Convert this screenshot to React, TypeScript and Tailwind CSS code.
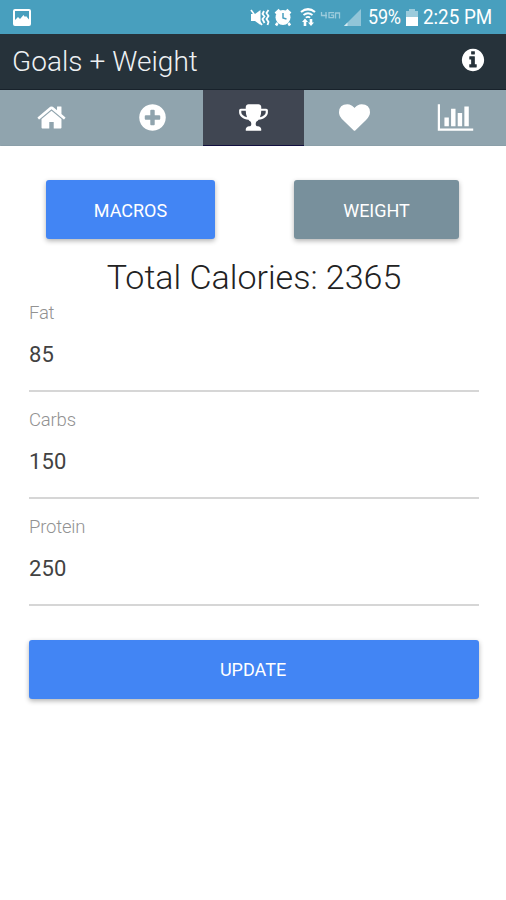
import { useState, type ReactNode } from "react";

const circle =
  "q0 209-103 385.5t-279.5 279.5-385.5 103-385.5-103-279.5-279.5-103-385.5 103-385.5 279.5-279.5 385.5-103 385.5 103 279.5 279.5 103 385.5z";

const icons = {
  home: "M1472 992v480q0 26-19 45t-45 19h-384v-384h-256v384h-384q-26 0-45-19t-19-45v-480q0-1 .5-3t.5-3l575-474 575 474q1 2 1 6zm223-69l-62 74q-8 9-21 11h-3q-13 0-21-7l-692-577-692 577q-12 8-24 7-13-2-21-11l-62-74q-8-10-7-23.5t11-21.5l719-599q32-26 76-26t76 26l244 204v-195q0-14 9-23t23-9h192q14 0 23 9t9 23v408l219 182q10 8 11 21.5t-7 23.5z",
  add:
    "M1344 960v-128q0-26-19-45t-45-19h-256v-256q0-26-19-45t-45-19h-128q-26 0-45 19t-19 45v256h-256q-26 0-45 19t-19 45v128q0 26 19 45t45 19h256v256q0 26 19 45t45 19h128q26 0 45-19t19-45v-256h256q26 0 45-19t19-45zm320-64" +
    circle,
  goals:
    "M522 883q-74-162-74-371h-256v96q0 78 94.500 162t235.500 113zm1078-275v-96h-256q0 209-74 371 141-29 235.500-113t94.500-162zm128-128v128q0 71-41.500 143t-112 130-173 97.500-215.500 44.500q-42 54-95 95-38 34-52.500 72.500t-14.500 89.500q0 54 30.500 91t97.500 37q75 0 133.500 45.500t58.500 114.500v64q0 14-9 23t-23 9h-832q-14 0-23-9t-9-23v-64q0-69 58.500-114.500t133.500-45.500q67 0 97.500-37t30.500-91q0-51-14.500-89.500t-52.500-72.500q-53-41-95-95-113-5-215.500-44.500t-173-97.500-112-130-41.500-143v-128q0-40 28-68t68-28h288v-96q0-66 47-113t113-47h576q66 0 113 47t47 113v96h288q40 0 68 28t28 68z",
  heart:
    "M896 1664q-26 0-44-18l-624-602q-10-8-27.500-26t-55.500-65.500-68-97.500-53.500-121-23.500-138q0-220 127-344t351-124q62 0 126.500 21.500t120 58 95.500 68.500 76 68q36-36 76-68t95.500-68.500 120-58 126.500-21.500q224 0 351 124t127 344q0 221-229 450l-623 600q-18 18-44 18z",
  chart:
    "M512 896v512h-256v-512h256zm384-512v1024h-256v-1024h256zm1024 1152v128h-2048v-1536h128v1408h1920zm-640-896v768h-256v-768h256zm384-384v1152h-256v-1152h256z",
  info:
    "M1152 1376v-160q0-14-9-23t-23-9h-96v-512q0-14-9-23t-23-9h-320q-14 0-23 9t-9 23v160q0 14 9 23t23 9h96v320h-96q-14 0-23 9t-9 23v160q0 14 9 23t23 9h448q14 0 23-9t9-23zm-128-896v-160q0-14-9-23t-23-9h-192q-14 0-23 9t-9 23v160q0 14 9 23t23 9h192q14 0 23-9t9-23zm640 416" +
    circle,
};

type IconName = keyof typeof icons;

function Icon({ name, className }: { name: IconName; className: string }) {
  return (
    <svg
      viewBox="0 0 1792 1792"
      fill="currentColor"
      overflow="visible"
      className={className}
    >
      <path d={icons[name]} />
    </svg>
  );
}

function StatusBar() {
  return (
    <div className="flex h-[34px] items-center bg-[#489fbe] pr-[14px] pl-[13px] text-white">
      <svg viewBox="0 0 18 17" className="h-[17px] w-[18px]">
        <path
          fill="currentColor"
          fillRule="evenodd"
          d="M2 0h14a2 2 0 0 1 2 2v13a2 2 0 0 1-2 2H2a2 2 0 0 1-2-2V2a2 2 0 0 1 2-2zm0 2v9l3-3 2 2 3.500-4 1.500 2 1-1 3 3.500V2z"
        />
      </svg>

      {/* vibrate, alarm, wifi, 4G and signal */}
      <svg viewBox="250 0 112 34" className="ml-auto h-[34px] w-[112px]">
        <g fill="none" stroke="currentColor" strokeWidth="1.800">
          <path d="M264 11l-1.500 3 2 2.500-2 2.500 2 4M268.500 10l-2 3 2 3-2 3 2 3-1 3" />
        </g>
        <path fill="currentColor" d="M251 14h4l5.500-4v15l-5.500-4h-4z" />
        <path d="M251 10l11 15" stroke="currentColor" strokeWidth="1.700" />

        <circle cx="283" cy="17.500" r="7.500" fill="currentColor" />
        <path
          d="M275.500 13.500l4-3.700M286.500 9.800l4 3.700M277.500 23l-1.500 2.500M288.500 23l1.500 2.500"
          stroke="currentColor"
          strokeWidth="2.600"
        />
        <path
          d="M283 13v5l3.500 1"
          fill="none"
          stroke="#489fbe"
          strokeWidth="1.500"
        />

        <g fill="none" stroke="currentColor">
          <path d="M301 12q7-5.500 14 0" strokeWidth="2.200" />
          <path d="M303.500 15q4.500-3.500 9 0" strokeWidth="1.800" />
          <path d="M305.800 17.700q2.200-1.700 4.400 0" strokeWidth="1.700" />
        </g>
        <path
          fill="currentColor"
          d="M305 18.500l3 3.500h-1.700v4h-2.600v-4H302zM311 26l-3-3.500h1.700V19h2.600v3.500h1.700z"
        />

        <path
          fill="none"
          stroke="#9bcbdc"
          strokeWidth="1.300"
          d="M321.500 12v3.500h5.500M326 12v6.500M334 12.700h-5v5h4.500v-2.500h-2.500M335.500 18.500v-5.500h4v5.500"
        />
        <path fill="#91c5d8" d="M361 9v17h-17z" />
        <path fill="#d5eaf1" d="M347.500 22.500v3.500H344z" />
      </svg>
      <span className="ml-[6px] w-[35px] origin-left scale-x-[0.9] text-[20px] leading-[36px] tracking-[-0.2px] whitespace-nowrap">
        59%
      </span>
      <svg viewBox="0 0 12 17" className="mt-[1px] ml-[3px] h-[17px] w-[12px]">
        <path fill="#9bcbdc" d="M3 0h6v2h3v6H0V2h3z" />
        <path fill="currentColor" d="M0 8h12v9H0z" />
      </svg>
      <span className="ml-[5px] w-[69px] origin-left scale-x-[0.94] text-[20px] leading-[36px] whitespace-nowrap">
        2:25 PM
      </span>
    </div>
  );
}

function Header() {
  return (
    <header className="flex h-[56px] items-center justify-between border-b border-[#18222b] bg-[#26323a] pr-[20px] pl-[12px] text-white">
      <h1 className="text-[28px] leading-[54px] font-light tracking-[0.05px] text-[#eef1f3]">
        Goals + Weight
      </h1>
      <Icon name="info" className="mb-[4px] size-[26px]" />
    </header>
  );
}

const tabs: IconName[] = ["home", "add", "goals", "heart", "chart"];

function Tabs() {
  const [active, setActive] = useState<IconName>("goals");

  return (
    <nav className="grid h-[56px] grid-cols-5 bg-[#90a4ae] pl-[1px]">
      {tabs.map((tab) => (
        <button
          key={tab}
          type="button"
          aria-label={tab}
          onClick={() => setActive(tab)}
          className={`flex items-center justify-center border-b text-white ${
            active === tab
              ? "border-[#12103f] bg-[#404652]"
              : "border-[#8b9fa9]"
          }`}
        >
          <Icon name={tab} className="size-[31px]" />
        </button>
      ))}
    </nav>
  );
}

function Button({
  className,
  children,
}: {
  className: string;
  children: ReactNode;
}) {
  return (
    <button
      type="button"
      className={`h-[59px] rounded-[3px] text-[18px] text-white shadow-[0_2px_5px_rgba(0,0,0,0.3)] ${className}`}
    >
      {children}
    </button>
  );
}

function Field({ label, value }: { label: string; value: string }) {
  return (
    <label className="flex h-[107px] flex-col">
      <span className="text-[18.500px] leading-[24px] font-light tracking-[-0.2px] text-[#929292]">
        {label}
      </span>
      <input
        defaultValue={value}
        className="h-[67px] border-b-2 border-[#d6d6d6] pb-[11px] pt-[5px] text-[22px] tracking-[0.1px] text-[#424242] outline-none"
      />
    </label>
  );
}

function App() {
  return (
    <div className="min-h-[900px] bg-white font-['Roboto',sans-serif]">
      <StatusBar />
      <Header />
      <Tabs />
      <main className="flex flex-col pt-[34px] pr-[27px] pl-[29px]">
        <div className="flex justify-between pr-[20px] pl-[17px]">
          <Button className="w-[169px] bg-[#4285f4] pt-[2px]">MACROS</Button>
          <Button className="w-[165px] bg-[#78909c] pt-[2px]">WEIGHT</Button>
        </div>
        <h2 className="mt-[16px] h-[46px] text-center text-[34px] leading-[44px] font-light text-[#222]">
          Total Calories: 2365
        </h2>
        <Field label="Fat" value="85" />
        <Field label="Carbs" value="150" />
        <Field label="Protein" value="250" />
        <Button className="mt-[18px] bg-[#4285f4] pr-[2px]">UPDATE</Button>
      </main>
    </div>
  );
}

export default App;
